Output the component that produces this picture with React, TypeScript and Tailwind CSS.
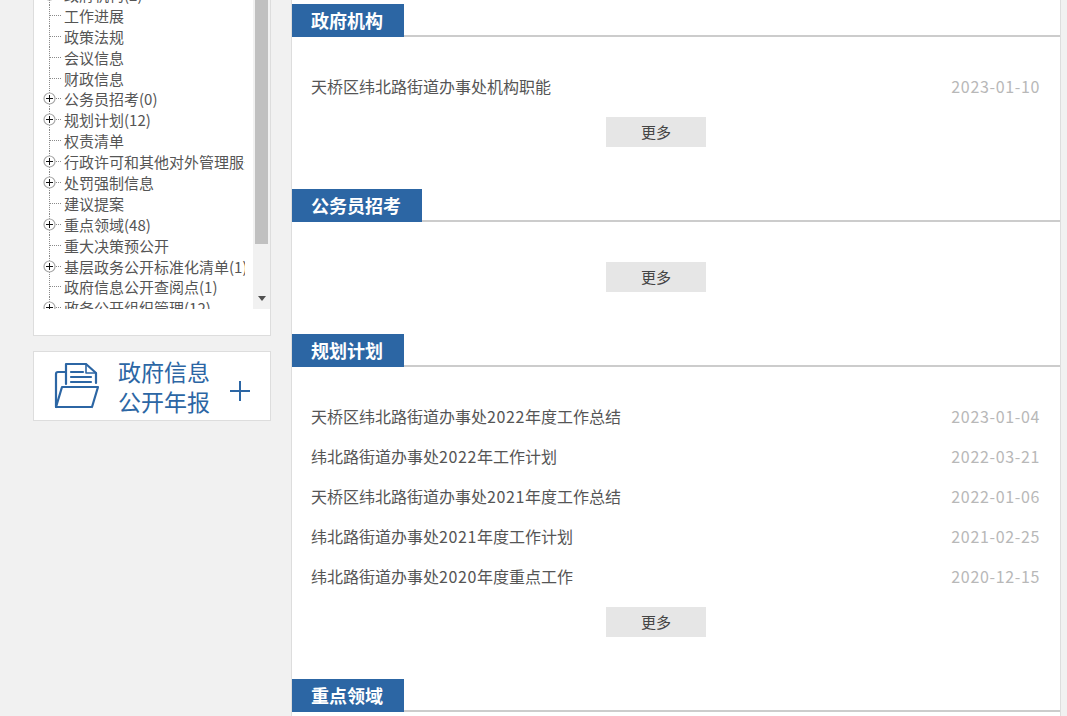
import React from "react";

const FONT = '"Noto Sans CJK SC", "Liberation Sans", sans-serif';

const tree: { t: string; plus?: boolean }[] = [
  { t: "政府机构(2)", plus: true },
  { t: "工作进展" },
  { t: "政策法规" },
  { t: "会议信息" },
  { t: "财政信息" },
  { t: "公务员招考(0)", plus: true },
  { t: "规划计划(12)", plus: true },
  { t: "权责清单" },
  { t: "行政许可和其他对外管理服务", plus: true },
  { t: "处罚强制信息", plus: true },
  { t: "建议提案" },
  { t: "重点领域(48)", plus: true },
  { t: "重大决策预公开" },
  { t: "基层政务公开标准化清单(1)", plus: true },
  { t: "政府信息公开查阅点(1)" },
  { t: "政务公开组织管理(12)", plus: true },
];

function TreeMark({ plus }: { plus?: boolean }) {
  return (
    <svg width="21" height="21" viewBox="0 0 21 21" className="shrink-0" shapeRendering="crispEdges">
      <line x1="6.5" y1="0" x2="6.5" y2="21" stroke="#8a8a8a" strokeDasharray="1 1" />
      <line x1="7" y1="10.5" x2="18" y2="10.5" stroke="#8a8a8a" strokeDasharray="1 1" />
      {plus && (
        <g>
          <circle cx="6.5" cy="10.5" r="5.5" fill="#fff" stroke="#a8a8a8" strokeWidth="1.2" shapeRendering="auto" />
          <rect x="3" y="10" width="7" height="1" fill="#111" />
          <rect x="6" y="7" width="1" height="7" fill="#111" />
        </g>
      )}
    </svg>
  );
}

function Digits({ text }: { text: string }) {
  return (
    <>
      {text.split(/(\d+)/).map((p, i) =>
        /\d/.test(p) ? (
          <span key={i} className="tracking-[0.6px]">
            {p}
          </span>
        ) : (
          p
        ),
      )}
    </>
  );
}

function Section({
  title,
  rows,
}: {
  title: string;
  rows: [string, string][];
}) {
  return (
    <section className="pb-[42px]">
      <div className="flex h-[33px] border-b-2 border-[#cccccc]">
        <h2 className="h-[33px] bg-[#2c66a4] pl-[19px] pr-[21px] text-[18px] font-bold leading-[32px] text-white">{title}</h2>
      </div>
      <ul className={rows.length ? "pt-[30px]" : "pt-[40px]"}>
        {rows.map(([a, b]) => (
          <li key={a} className="flex h-10 items-center justify-between pb-[2px] pl-[19px] pr-5 text-[16px]">
            <span className="text-[#555555]">
              <Digits text={a} />
            </span>
            <span className="text-[#b8b8b8] tracking-[0.65px]">{b}</span>
          </li>
        ))}
      </ul>
      <div className={rows.length ? "mt-[10px] flex justify-center pr-10" : "flex justify-center pr-10"}>
        <button className="h-[30px] w-[100px] bg-[#e6e6e6] text-[15px] leading-[30px] text-[#444444]">更多</button>
      </div>
    </section>
  );
}

function FolderIcon() {
  return (
    <svg width="46" height="48" viewBox="0 0 46 48" fill="none" stroke="#2c66a4" strokeWidth="2.2" strokeLinejoin="round" strokeLinecap="round" className="shrink-0">
      <path d="M12 22V2h20l10 9v10" />
      <path d="M32 2v9h10" strokeWidth="1.6" />
      <path d="M17 10h12M17 15h20M17 20h20" />
      <path d="M12 10H4a2 2 0 0 0-2 2v33h35" />
      <path d="M2 45l6-20h36l-6 20" />
    </svg>
  );
}

export default function App() {
  return (
    <div
      className="flex h-[716px] w-[1067px] items-start gap-5 overflow-hidden bg-[#f1f1f1] pl-[33px]"
      style={{ fontFamily: FONT }}
    >
      <aside className="w-[238px] shrink-0">
        <div className="-mt-[10px] h-[346px] border border-[#dddddd] bg-white pt-[9px]">
          <div className="flex h-[309px]">
            <div className="h-[309px] w-[219px] overflow-hidden pl-[9px]">
              <ul className="-mt-[16px]">
                {tree.map((r) => (
                  <li key={r.t} className="flex h-[20.9px] items-center text-[15px] leading-[21px] text-[#555555]">
                    <TreeMark plus={r.plus} />
                    <span className="w-[181px] overflow-hidden whitespace-nowrap">{r.t}</span>
                  </li>
                ))}
              </ul>
            </div>
            <div className="flex h-[309px] w-[17px] flex-col items-center bg-[#f1f1f1]">
              <div className="h-[244px] w-[13px] shrink-0 bg-[#c0c0c0]" />
              <div className="mt-[52px] h-0 w-0 border-x-[4px] border-t-[5px] border-x-transparent border-t-[#505050]" />
            </div>
          </div>
        </div>
        <div className="mt-[15px] flex h-[70px] items-center border border-[#dddddd] bg-white pl-5 text-[#2c66a4]">
          <FolderIcon />
          <div className="ml-[18px] w-[92px] text-[23px] leading-[30px]">
            <div>政府信息</div>
            <div>公开年报</div>
          </div>
          <svg width="22" height="22" viewBox="0 0 22 22" className="ml-[19px] mt-[10px] shrink-0" stroke="#2c66a4" strokeWidth="2">
            <path d="M11 1v20M1 11h20" />
          </svg>
        </div>
      </aside>
      <main className="h-[800px] w-[770px] shrink-0 border-x border-[#dddddd] bg-white pt-1">
        <Section title="政府机构" rows={[["天桥区纬北路街道办事处机构职能", "2023-01-10"]]} />
        <Section title="公务员招考" rows={[]} />
        <Section
          title="规划计划"
          rows={[
            ["天桥区纬北路街道办事处2022年度工作总结", "2023-01-04"],
            ["纬北路街道办事处2022年工作计划", "2022-03-21"],
            ["天桥区纬北路街道办事处2021年度工作总结", "2022-01-06"],
            ["纬北路街道办事处2021年度工作计划", "2021-02-25"],
            ["纬北路街道办事处2020年度重点工作", "2020-12-15"],
          ]}
        />
        <Section title="重点领域" rows={[]} />
      </main>
    </div>
  );
}
